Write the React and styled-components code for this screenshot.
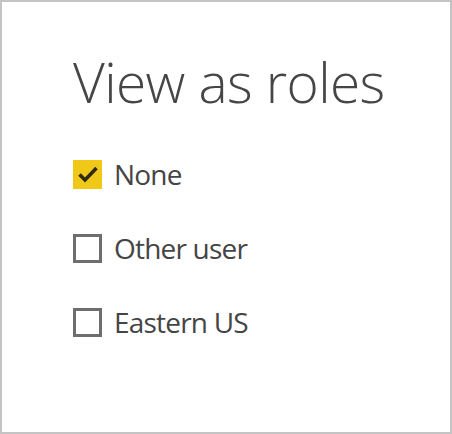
import React, { useState } from 'react';
import styled, { createGlobalStyle } from 'styled-components';

const GlobalStyle = createGlobalStyle`
    html, body {
        margin: 0;
        padding: 0;
        background: #ffffff;
    }
`

const Frame = styled.div`
    box-sizing: border-box;
    width: 452px;
    height: 434px;
    border: 2px solid #c4c4c4;
    background: #ffffff;
    padding: 48px 0 0 71px;
    font-family: "Open Sans", "Liberation Sans", sans-serif;
    color: #3b3b3b;
`

const Title = styled.h1`
    margin: 0;
    font-size: 55px;
    font-weight: 300;
    line-height: 64px;
    color: #464646;
    letter-spacing: -0.6px;
`

const List = styled.div`
    display: flex;
    flex-direction: column;
    gap: 44px;
    margin-top: 45px;
`

const Row = styled.label`
    display: flex;
    align-items: center;
    gap: 12px;
    height: 30px;
    cursor: pointer;
`

const Box = styled.span`
    box-sizing: border-box;
    width: 29px;
    height: 29px;
    display: flex;
    align-items: center;
    justify-content: center;
    background: ${p => p.checked ? '#f0c918' : '#ffffff'};
    border: ${p => p.checked ? 'none' : '3px solid #6e6e6e'};
`

const Label = styled.span`
    font-size: 28px;
    font-weight: 400;
    color: #454545;
    letter-spacing: -0.8px;
`

const roles = ['None', 'Other user', 'Eastern US'];

export default function App() {
    const [selected, setSelected] = useState('None');

    return (
        <>
            <GlobalStyle />
            <Frame>
                <Title>View as roles</Title>
                <List>
                    {roles.map(role => (
                        <Row key={role} onClick={() => setSelected(role)}>
                            <Box checked={selected === role}>
                                {selected === role && (
                                    <svg width="24" height="24" viewBox="0 0 24 24">
                                        <path d="M3.5 12.5 L9 18 L20.5 6" fill="none" stroke="#2e2a10" strokeWidth="3.6" />
                                    </svg>
                                )}
                            </Box>
                            <Label>{role}</Label>
                        </Row>
                    ))}
                </List>
            </Frame>
        </>
    );
}
